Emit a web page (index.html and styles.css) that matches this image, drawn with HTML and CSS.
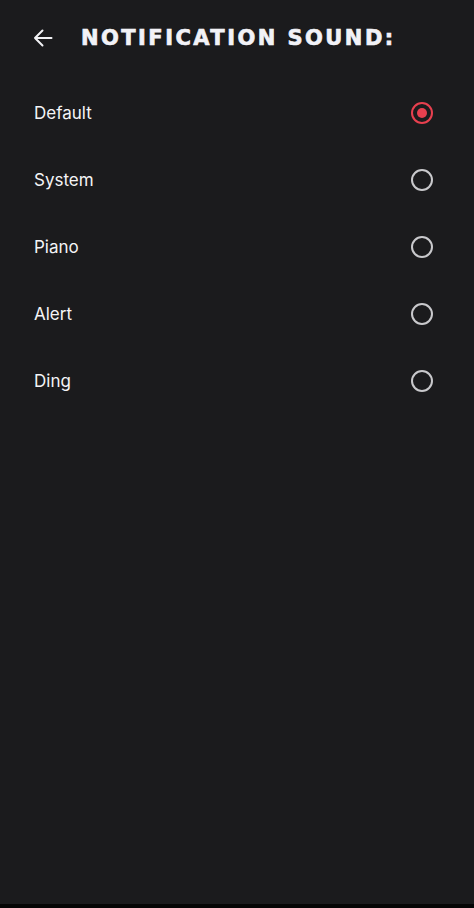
FILE: index.html
```html
<!DOCTYPE html>
<html lang="en">
<head>
<meta charset="utf-8">
<title>Notification sound</title>
<link rel="stylesheet" href="styles.css">
</head>
<body>
<div class="screen">
  <header class="header">
    <button class="back" aria-label="Back">
      <svg width="20" height="18" viewBox="0 0 20 18" fill="none" stroke="#f2f2f5" stroke-width="2" stroke-linecap="round" stroke-linejoin="round">
        <path d="M18.5 9H2M9.5 1.5L2 9l7.5 7.5"/>
      </svg>
    </button>
    <h1 class="title">NOTIFICATION SOUND:</h1>
  </header>
  <ul class="options">
    <li class="option"><span class="label">Default</span><span class="radio checked"></span></li>
    <li class="option"><span class="label">System</span><span class="radio"></span></li>
    <li class="option"><span class="label">Piano</span><span class="radio"></span></li>
    <li class="option"><span class="label">Alert</span><span class="radio"></span></li>
    <li class="option"><span class="label">Ding</span><span class="radio"></span></li>
  </ul>
  <div class="bottom-bar"></div>
</div>
</body>
</html>
```
FILE: styles.css
```css
* { box-sizing: border-box; }
html, body {
  margin: 0;
  padding: 0;
  background: #1b1b1d;
}
.screen {
  width: 474px;
  height: 908px;
  background: #1b1b1d;
  color: #f2f2f5;
  font-family: "Inter", "Roboto", sans-serif;
  display: flex;
  flex-direction: column;
}
.header {
  height: 76px;
  flex: none;
  display: flex;
  align-items: center;
  padding-left: 33px;
}
.back {
  background: none;
  border: 0;
  padding: 0;
  width: 20px;
  height: 18px;
  display: flex;
  margin-right: 28px;
  cursor: pointer;
}
.title {
  margin: 0;
  font-family: "DejaVu Sans", sans-serif;
  font-weight: 700;
  font-size: 21px;
  letter-spacing: 2.45px;
  color: #f2f2f7;
  white-space: nowrap;
  -webkit-text-stroke: 0.7px #f2f2f7;
}
.options {
  list-style: none;
  margin: 0;
  padding: 3px 0 0 0;
  flex: 1;
}
.option {
  height: 67px;
  display: flex;
  align-items: center;
  justify-content: space-between;
  padding: 0 41px 0 34px;
}
.label {
  font-size: 17px;
  color: #f4f4f6;
}
.radio {
  width: 22px;
  height: 22px;
  border: 2px solid #c9c9cc;
  border-radius: 50%;
  display: flex;
  align-items: center;
  justify-content: center;
}
.radio.checked {
  border-color: #e8404f;
}
.radio.checked::after {
  content: "";
  width: 10px;
  height: 10px;
  border-radius: 50%;
  background: #e8404f;
}
.bottom-bar {
  flex: none;
  height: 4px;
  background: #050505;
}
```
